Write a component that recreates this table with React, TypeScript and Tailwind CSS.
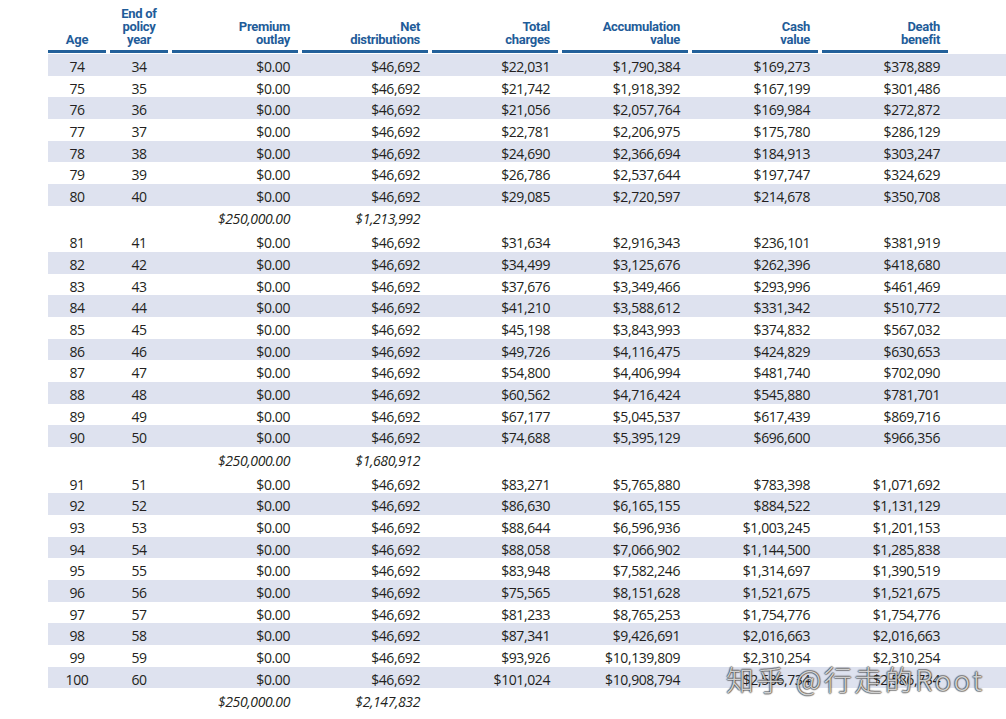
import React from "react";

type Row = [number, number, string, string, string, string, string, string];

const groups: { rows: Row[]; total: [string, string] }[] = [
  {
    rows: [
      [74, 34, "$0.00", "$46,692", "$22,031", "$1,790,384", "$169,273", "$378,889"],
      [75, 35, "$0.00", "$46,692", "$21,742", "$1,918,392", "$167,199", "$301,486"],
      [76, 36, "$0.00", "$46,692", "$21,056", "$2,057,764", "$169,984", "$272,872"],
      [77, 37, "$0.00", "$46,692", "$22,781", "$2,206,975", "$175,780", "$286,129"],
      [78, 38, "$0.00", "$46,692", "$24,690", "$2,366,694", "$184,913", "$303,247"],
      [79, 39, "$0.00", "$46,692", "$26,786", "$2,537,644", "$197,747", "$324,629"],
      [80, 40, "$0.00", "$46,692", "$29,085", "$2,720,597", "$214,678", "$350,708"],
    ],
    total: ["$250,000.00", "$1,213,992"],
  },
  {
    rows: [
      [81, 41, "$0.00", "$46,692", "$31,634", "$2,916,343", "$236,101", "$381,919"],
      [82, 42, "$0.00", "$46,692", "$34,499", "$3,125,676", "$262,396", "$418,680"],
      [83, 43, "$0.00", "$46,692", "$37,676", "$3,349,466", "$293,996", "$461,469"],
      [84, 44, "$0.00", "$46,692", "$41,210", "$3,588,612", "$331,342", "$510,772"],
      [85, 45, "$0.00", "$46,692", "$45,198", "$3,843,993", "$374,832", "$567,032"],
      [86, 46, "$0.00", "$46,692", "$49,726", "$4,116,475", "$424,829", "$630,653"],
      [87, 47, "$0.00", "$46,692", "$54,800", "$4,406,994", "$481,740", "$702,090"],
      [88, 48, "$0.00", "$46,692", "$60,562", "$4,716,424", "$545,880", "$781,701"],
      [89, 49, "$0.00", "$46,692", "$67,177", "$5,045,537", "$617,439", "$869,716"],
      [90, 50, "$0.00", "$46,692", "$74,688", "$5,395,129", "$696,600", "$966,356"],
    ],
    total: ["$250,000.00", "$1,680,912"],
  },
  {
    rows: [
      [91, 51, "$0.00", "$46,692", "$83,271", "$5,765,880", "$783,398", "$1,071,692"],
      [92, 52, "$0.00", "$46,692", "$86,630", "$6,165,155", "$884,522", "$1,131,129"],
      [93, 53, "$0.00", "$46,692", "$88,644", "$6,596,936", "$1,003,245", "$1,201,153"],
      [94, 54, "$0.00", "$46,692", "$88,058", "$7,066,902", "$1,144,500", "$1,285,838"],
      [95, 55, "$0.00", "$46,692", "$83,948", "$7,582,246", "$1,314,697", "$1,390,519"],
      [96, 56, "$0.00", "$46,692", "$75,565", "$8,151,628", "$1,521,675", "$1,521,675"],
      [97, 57, "$0.00", "$46,692", "$81,233", "$8,765,253", "$1,754,776", "$1,754,776"],
      [98, 58, "$0.00", "$46,692", "$87,341", "$9,426,691", "$2,016,663", "$2,016,663"],
      [99, 59, "$0.00", "$46,692", "$93,926", "$10,139,809", "$2,310,254", "$2,310,254"],
      [100, 60, "$0.00", "$46,692", "$101,024", "$10,908,794", "$2,586,734", "$2,586,734"],
    ],
    total: ["$250,000.00", "$2,147,832"],
  },
];

const headers = [
  { label: ["Age"], center: true },
  { label: ["End of", "policy", "year"], center: true },
  { label: ["Premium", "outlay"] },
  { label: ["Net", "distributions"] },
  { label: ["Total", "charges"] },
  { label: ["Accumulation", "value"] },
  { label: ["Cash", "value"] },
  { label: ["Death", "benefit"] },
];

const grid = "grid grid-cols-[58px_58px_126px_126px_126px_126px_126px_126px] gap-x-[4px]";

const App = () => {
  return (
    <div className="relative w-[1006px] h-[719px] bg-white overflow-hidden pl-[48px]">
      {/* header */}
      <div className={`${grid} h-[53px]`}>
        {headers.map((h, i) => (
          <div
            key={i}
            className={`flex flex-col justify-end pb-[4px] border-b-[3px] border-[#22609a] text-[#1f5c99] font-bold text-[13px] leading-[13px] tracking-[-0.3px] ${
              h.center ? "items-center" : "items-end pr-[8px]"
            }`}
            style={{ fontFamily: "Roboto, 'Liberation Sans', sans-serif" }}
          >
            {h.label.map((l) => (
              <span key={l}>{l}</span>
            ))}
          </div>
        ))}
      </div>

      {/* body */}
      <div
        className="mt-[1px] flex flex-col text-[14px] text-[#231f20] tracking-[-0.4px]"
        style={{ fontFamily: "'Open Sans', 'Noto Sans', sans-serif" }}
      >
        {groups.map((g, gi) => (
          <React.Fragment key={gi}>
            {g.rows.map((r) => (
              <div
                key={r[0]}
                className={`${grid} h-[21.67px] items-center ${r[0] % 2 === 0 ? "bg-[#dee2ef]" : "bg-white"}`}
              >
                <span className="text-center pt-[2px]">{r[0]}</span>
                <span className="text-center pt-[2px]">{r[1]}</span>
                {r.slice(2).map((v, ci) => (
                  <span key={ci} className="text-right pr-[8px] pt-[2px]">
                    {v}
                  </span>
                ))}
              </div>
            ))}
            <div className={`${grid} h-[24.8px] items-center italic`}>
              <span />
              <span />
              <span className="text-right pr-[8px] pt-[2px]">{g.total[0]}</span>
              <span className="text-right pr-[8px] pt-[2px]">{g.total[1]}</span>
            </div>
          </React.Fragment>
        ))}
      </div>

      {/* watermark */}
      <div
        className="absolute left-[726px] top-[662px] text-[28px] leading-[34px] text-white/75 tracking-[2.5px] whitespace-nowrap"
        style={{
          fontFamily: "'Noto Sans CJK SC', 'Noto Sans', sans-serif",
          fontWeight: 300,
          textShadow:
            "0 0 1px rgba(60,60,60,0.9), 1px 0 1px rgba(60,60,60,0.5), -1px 0 1px rgba(60,60,60,0.5), 0 1px 1px rgba(60,60,60,0.5), 0 -1px 1px rgba(60,60,60,0.5)",
        }}
      >
        知乎 @行走的Root
      </div>
    </div>
  );
};

export default App;
